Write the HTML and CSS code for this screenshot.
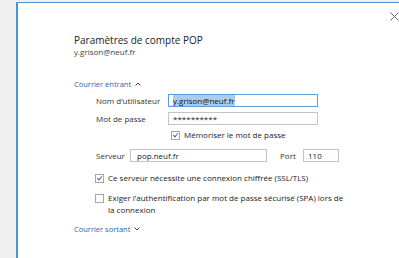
FILE: index.html
```html
<!DOCTYPE html>
<html lang="fr">
<head>
  <meta charset="UTF-8">
  <title>Paramètres de compte POP</title>
  <link rel="stylesheet" href="styles.css">
</head>
<body>

<div class="window">
  <div class="titlebar">
    <svg class="close" width="9" height="9" viewBox="0 0 9 9">
      <path d="M0.5 0.5 L8.5 8.5 M8.5 0.5 L0.5 8.5" stroke="#666" stroke-width="1" fill="none"/>
    </svg>
  </div>

  <div class="content">
    <h1>Paramètres de compte POP</h1>
    <div class="account">y.grison@neuf.fr</div>

    <div class="toggle toggle-in">Courrier entrant
      <svg width="6" height="4" viewBox="0 0 6 4"><path d="M0.5 3.5 L3 1 L5.5 3.5" stroke="#444" fill="none"/></svg>
    </div>

    <div class="form">
      <div class="row row-user">
        <label>Nom d’utilisateur</label>
        <div class="input focused"><span class="sel">y.grison@neuf.fr</span></div>
      </div>
      <div class="row row-pass">
        <label>Mot de passe</label>
        <div class="input">**********</div>
      </div>
      <div class="check-line remember">
        <span class="box checked"></span>Mémoriser le mot de passe
      </div>
      <div class="row row-server">
        <label class="short">Serveur</label>
        <div class="input server">pop.neuf.fr</div>
        <label class="port-label">Port</label>
        <div class="input port">110</div>
      </div>
      <div class="check-line ssl">
        <span class="box checked"></span>Ce serveur nécessite une connexion chiffrée (SSL/TLS)
      </div>
      <div class="check-line spa">
        <span class="box"></span>
        <span>Exiger l’authentification par mot de passe sécurisé (SPA) lors de<br>la connexion</span>
      </div>
    </div>

    <div class="toggle toggle-out">Courrier sortant
      <svg width="6" height="4" viewBox="0 0 6 4"><path d="M0.5 0.5 L3 3 L5.5 0.5" stroke="#444" fill="none"/></svg>
    </div>
  </div>
</div>

</body>
</html>
```

FILE: styles.css
```css
body {
  margin: 0;
  background: #f0f0f0;
  font-family: "Open Sans", "Noto Sans", sans-serif;
  color: #333;
  height: 258px;
  overflow: hidden;
}

.window {
  margin: 2px 0 0 16px;
  border-top: 1px solid #4a92da;
  border-left: 2px solid #4a92da;
  background: #fff;
  height: 260px;
}

.titlebar {
  display: flex;
  justify-content: flex-end;
  height: 22px;
  padding: 9px 0 0 0;
  box-sizing: border-box;
}

.close {
  margin-right: 0;
}

.content {
  padding-left: 56px;
  display: flex;
  flex-direction: column;
}

h1 {
  margin: 8px 0 0 0;
  font-size: 10px;
  font-weight: normal;
  line-height: 14px;
  color: #222;
}

.account {
  font-size: 8px;
  line-height: 10px;
  color: #444;
}

.toggle {
  font-size: 7.5px;
  line-height: 12px;
  color: #2a67ad;
  display: flex;
  align-items: center;
  gap: 4px;
}

.toggle-in {
  margin-top: 21px;
}

.toggle-out {
  margin-top: 7px;
}

.form {
  padding-left: 22px;
  display: flex;
  flex-direction: column;
  font-size: 8px;
}

.row {
  display: flex;
  align-items: center;
  height: 13px;
}

.row label {
  width: 72px;
}

.row .short {
  width: 34px;
}

.row-user {
  margin-top: 4px;
}

.row-pass {
  margin-top: 5px;
}

.row-server {
  margin-top: 8px;
}

.input {
  box-sizing: border-box;
  width: 150px;
  height: 13px;
  border: 1px solid #c4c4c4;
  padding-left: 4px;
  line-height: 11px;
  color: #1a1a1a;
  font-size: 8px;
}

.input.focused {
  border-color: #5a9ee2;
}

.sel {
  background: #a9cdf0;
  color: #111;
}

.input.server {
  width: 137px;
  padding-left: 6px;
}

.row .port-label {
  margin-left: 13px;
  width: 23px;
}

.input.port {
  width: 36px;
}

.check-line {
  display: flex;
  align-items: flex-start;
  line-height: 12px;
  color: #222;
}

.remember {
  margin: 4px 0 0 76px;
}

.ssl {
  margin-top: 10px;
}

.spa {
  margin-top: 8px;
}

.box {
  box-sizing: border-box;
  width: 9px;
  height: 9px;
  border: 1px solid #a6a6a6;
  margin: 2px 4px 0 -1px;
  flex-shrink: 0;
  position: relative;
}

.box.checked::after {
  content: "";
  position: absolute;
  left: 2px;
  top: 0px;
  width: 2px;
  height: 4px;
  border-right: 1px solid #666;
  border-bottom: 1px solid #666;
  transform: rotate(40deg);
}
```
